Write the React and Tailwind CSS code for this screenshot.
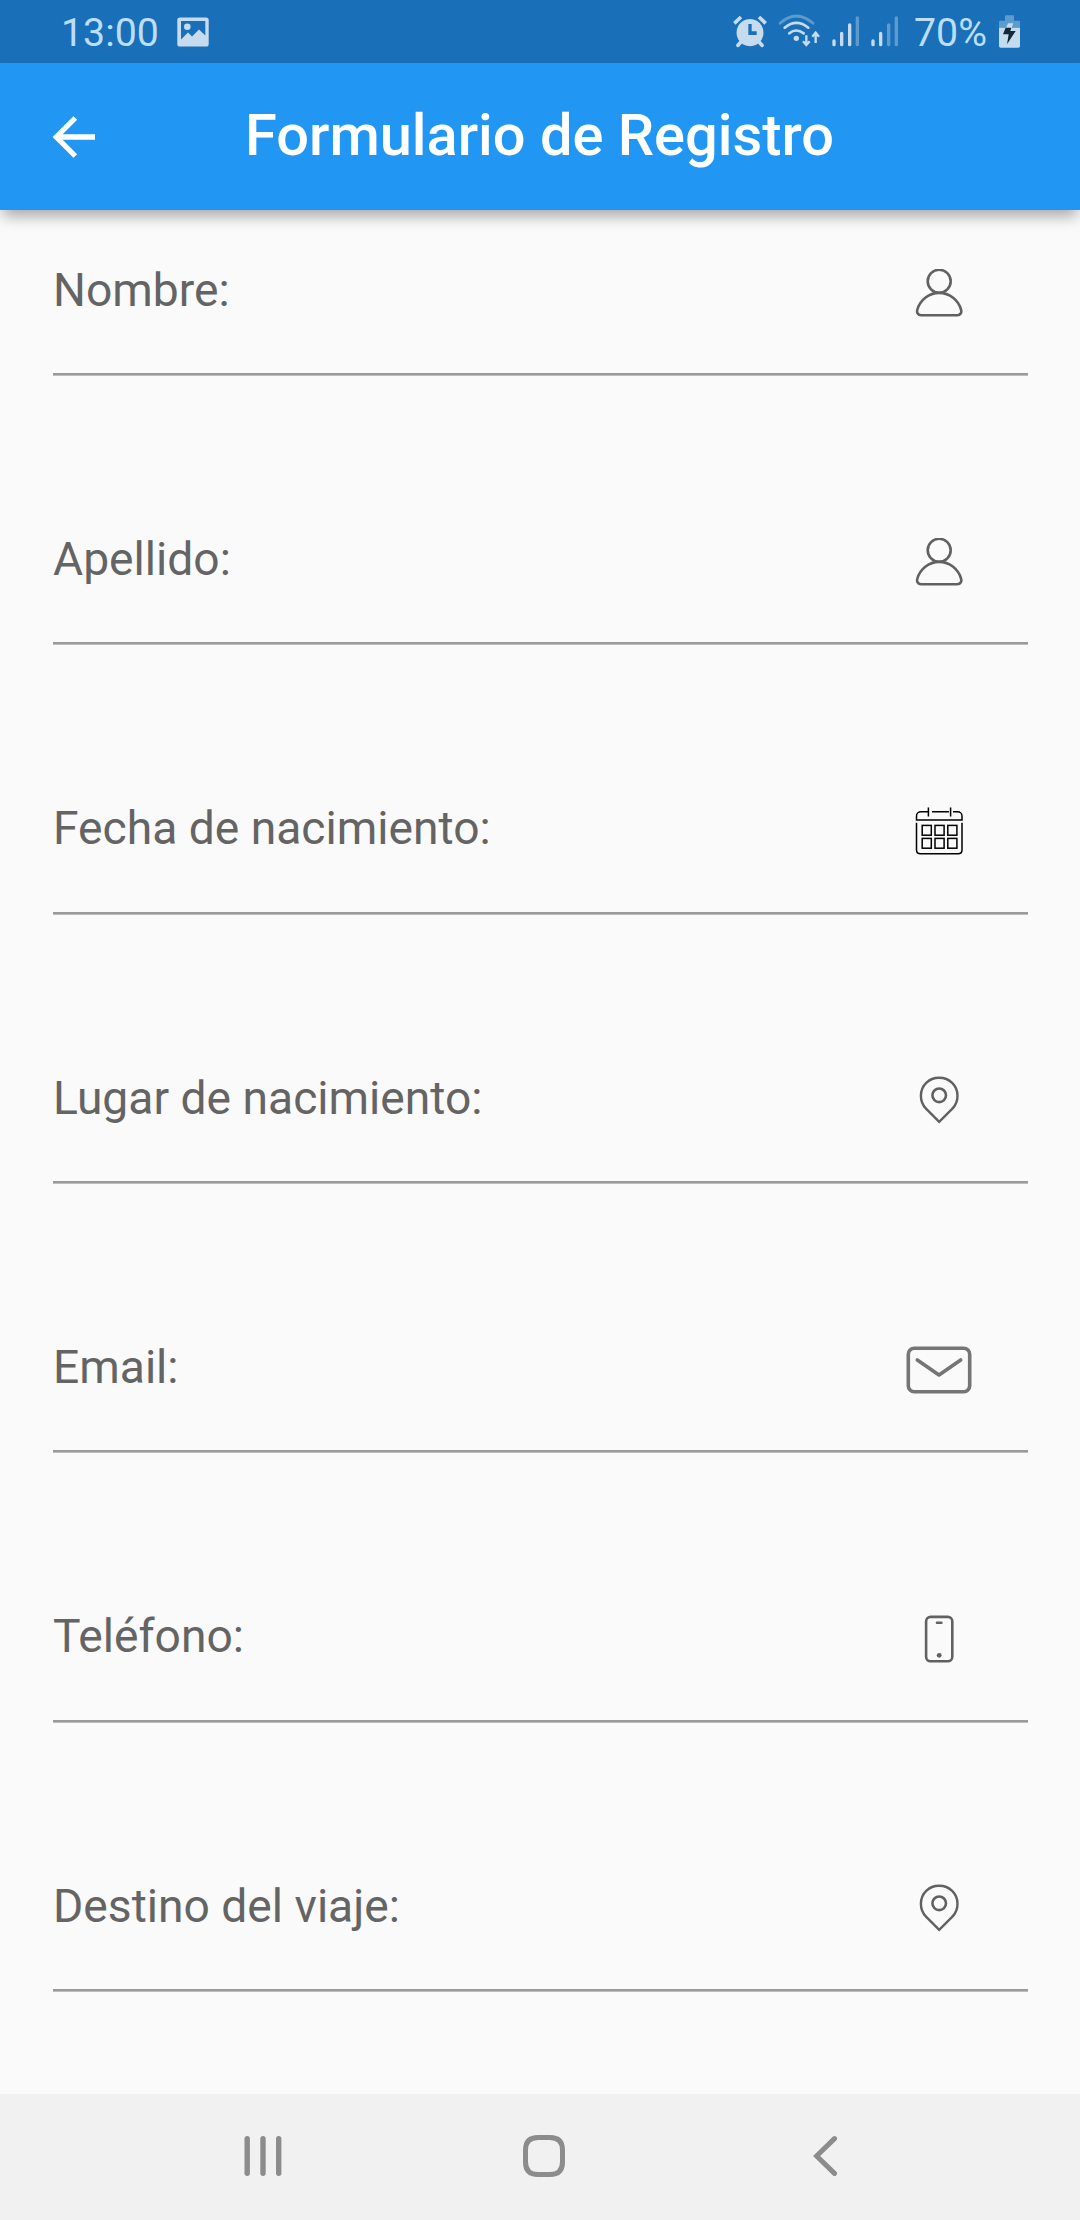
import React from "react";

const STROKE = "#616161";

function PersonIcon() {
  return (
    <svg width="48" height="48" viewBox="0 0 48 48" fill="none" stroke={STROKE} strokeWidth="2.6">
      <circle cx="24.2" cy="12.3" r="11.5" />
      <path d="M24.2 23.9C13.5 23.9 5 31.5 2.4 40.5C1.4 43.7 3 46.2 6 46.2H42.4C45.4 46.2 47 43.7 46 40.5C43.4 31.5 34.9 23.9 24.2 23.9Z" />
    </svg>
  );
}

function CalendarIcon() {
  return (
    <svg width="48" height="48" viewBox="0 0 48 48" fill="none" stroke="#000" strokeWidth="1.5">
      <path d="M10.5 4.8H6C3.5 4.8 1.5 6.5 1.5 9V13H47V9C47 6.5 45 4.8 42.5 4.8H38M6.5 4.8H14M17 4.8H34M13.4 .5V9.5M35.6 .5V9.5" />
      <path d="M1.5 15.8V43C1.5 45.3 3 46.8 5.5 46.8H43C45.5 46.8 47 45.3 47 43V15.8" />
      {[7.2, 20, 32.8].map((x) =>
        [18.4, 31.4].map((y) => <rect key={x + "-" + y} x={x} y={y} width="9.1" height="9.8" />)
      )}
    </svg>
  );
}

function PinIcon() {
  return (
    <svg width="48" height="48" viewBox="0 0 48 48" fill="none" stroke={STROKE} strokeWidth="2.4">
      <path d="M24.2 45.9L11 32.6C7.5 29 5.9 25 5.9 19.7C5.9 9.2 14 1.7 24.2 1.7S42.5 9.2 42.5 19.7C42.5 25 40.9 29 37.4 32.6Z" />
      <circle cx="24.2" cy="19.3" r="6.8" strokeWidth="2.6" />
    </svg>
  );
}

function MailIcon() {
  return (
    <svg width="66" height="48" viewBox="0 0 66 48" fill="none" stroke="#757575" strokeWidth="3.6" strokeLinecap="round" strokeLinejoin="round">
      <rect x="2.3" y="2.3" width="61.4" height="43.4" rx="6" />
      <path d="M11.3 13.9L33 28.9L54.7 13.9" />
    </svg>
  );
}

function PhoneIcon() {
  return (
    <svg width="48" height="48" viewBox="0 0 48 48" fill="none" stroke={STROKE} strokeWidth="2.6" strokeLinecap="round">
      <rect x="11.1" y="1.9" width="26.2" height="44.4" rx="4.5" />
      <path d="M22 7.7H26.4" />
      <circle cx="24.2" cy="40.3" r="2.4" fill={STROKE} stroke="none" />
    </svg>
  );
}

const FIELDS = [
  ["Nombre:", PersonIcon],
  ["Apellido:", PersonIcon],
  ["Fecha de nacimiento:", CalendarIcon],
  ["Lugar de nacimiento:", PinIcon],
  ["Email:", MailIcon],
  ["Teléfono:", PhoneIcon],
  ["Destino del viaje:", PinIcon],
];

function StatusBar() {
  return (
    <div className="flex h-[63px] shrink-0 items-center bg-[#1a70b8] pl-[61px] text-[39.3px] text-[#bbdefb]">
      <span className="w-[116px] pt-[4px] leading-none">13:00</span>
      <svg width="32" height="30" viewBox="0 0 32 30" fill="#c6dbee">
        <path fillRule="evenodd" d="M3 .5H29Q31.7 .5 31.7 3V27Q31.7 29.6 29 29.6H3Q.3 29.6 .3 27V3Q.3 .5 3 .5ZM4 4V22.5L11 15.5L15 19.5L22 12.5L28.3 18.5V4Z" />
        <circle cx="10.3" cy="9.8" r="3.3" />
      </svg>
      {/* alarm, wifi and both signal meters */}
      <svg className="ml-[511px] shrink-0" width="194" height="63" viewBox="0 0 582 189" fill="none" stroke="#c6dbee">
        <path fill="#c6dbee" stroke="none" fillRule="evenodd" d="M90 57A40.500 41 0 1 0 90.100 57ZM85 72H95V94H110V105H85Z" />
        <path d="M43 70L63 51M117 51L137 70" strokeWidth="11" />
        <path d="M62 127L54 136M118 127L126 136" strokeWidth="11" strokeLinecap="round" />
        <path d="M180 70Q229 26 279 70" strokeWidth="8" opacity="0.4" strokeLinecap="round" />
        <path d="M194 83Q229 54 265 83M208 100Q229 83 251 100" strokeWidth="8" strokeLinecap="round" />
        <circle cx="229" cy="115" r="8" fill="#c6dbee" stroke="none" />
        <path d="M259 106V134M249 124L259 135L269 124M287 129V99M277 110L287 98L297 110" strokeWidth="7" />
        <g strokeWidth="10" strokeLinecap="round">
          <path d="M342 123V134M365 100V134M389 75V134M459 123V134M482 100V134" />
          <path d="M412 54V134M506 75V134M529 54V134" opacity="0.4" />
        </g>
      </svg>
      <span className="w-[84px] pt-[4px] leading-none">70%</span>
      <svg width="24" height="63" viewBox="834 0 72 189" fill="#c6dbee">
        <path d="M855 62V49Q855 46 858 46H879Q882 46 882 49V62H897Q900 62 900 65V83H837V65Q837 62 840 62Z" opacity="0.4" />
        <path d="M837 83H900V138Q900 143 895 143H842Q837 143 837 138Z" />
        <path d="M864 70H880L875 84H858Z" />
        <path d="M857 83H874L871 93H887L861 133L866 103H849Z" fill="#13283b" />
      </svg>
    </div>
  );
}

function NavBar() {
  return (
    <nav className="flex h-[126px] shrink-0 items-center bg-[#f1f1f1] pb-[2px] pl-[244px]">
      <svg width="38" height="42" viewBox="0 0 38 42" fill="none" stroke="#8c8c8c" strokeWidth="5.4" strokeLinecap="round">
        <path d="M3.200 3.700V38.300M19 3.700V38.300M34.700 3.700V38.300" />
      </svg>
      <svg className="ml-[241px]" width="42" height="42" viewBox="0 0 42 42" fill="none" stroke="#8c8c8c" strokeWidth="5">
        <path d="M15 2.500H27C35.500 2.500 39.500 6.500 39.500 15V27C39.500 35.500 35.500 39.500 27 39.500H15C6.500 39.500 2.500 35.500 2.500 27V15C2.500 6.500 6.500 2.500 15 2.500Z" />
      </svg>
      <svg className="ml-[247px]" width="26" height="42" viewBox="0 0 26 42" fill="none" stroke="#8c8c8c" strokeWidth="5" strokeLinecap="round">
        <path d="M22.500 3.600L4.600 21L22.500 38.400" />
      </svg>
    </nav>
  );
}

export default function App() {
  return (
    <div className="flex h-[2220px] w-[1080px] flex-col overflow-hidden bg-[#fafafa] font-['Roboto',sans-serif]">
      <StatusBar />
      <header className="z-10 flex h-[147px] shrink-0 items-center bg-[#2196f3] pl-[52px] text-white shadow-[0_9px_14px_-3px_rgba(0,0,0,0.34)]">
        <svg width="44" height="44" viewBox="0 0 44 44" fill="none" stroke="#fff" strokeWidth="5.3">
          <path d="M43 22H5M23.3 3L4.3 22L23.3 41" />
        </svg>
        <h1 className="ml-[149px] whitespace-nowrap pb-[1.6px] text-[57.75px] font-medium leading-none">Formulario de Registro</h1>
      </header>
      <main className="min-h-0 flex-1 overflow-hidden pl-[53px] pr-[52px]">
        {FIELDS.map(([label, Icon]) => (
          <div key={label} className="h-[269.33px]">
            <div className="flex h-[163px] items-center justify-between pt-[2px]">
              <span className="whitespace-nowrap pb-[5.4px] text-[46.2px] leading-none text-[#646464]">{label}</span>
              <div className="flex w-[179px] justify-center"><Icon /></div>
            </div>
            <div className="h-[3px] border-b border-[#bdbdbd] bg-[#9a9a9a]" />
          </div>
        ))}
      </main>
      <NavBar />
    </div>
  );
}
